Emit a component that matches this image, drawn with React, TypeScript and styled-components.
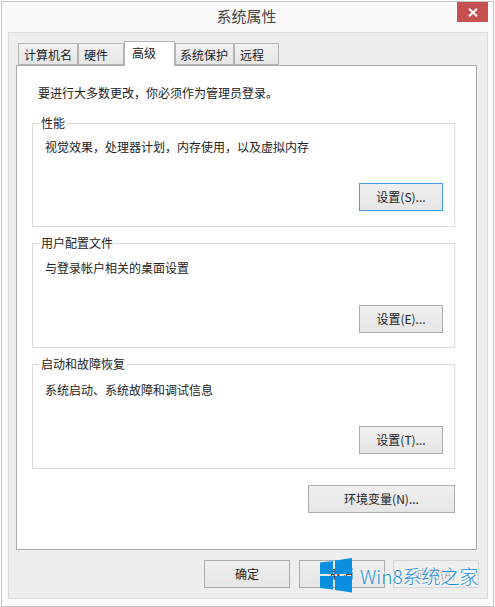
import React from "react";
import styled, { createGlobalStyle } from "styled-components";

const GlobalStyle = createGlobalStyle`
  html, body {
    margin: 0;
    padding: 0;
    background: #ffffff;
  }
  * {
    box-sizing: border-box;
  }
  body {
    font-family: "Noto Sans CJK SC", "Liberation Sans", sans-serif;
    font-size: 12px;
    color: #222222;
  }
`;

const tabs = [
  { label: "计算机名", width: 60, inset: 5 },
  { label: "硬件", width: 46, inset: 5 },
  { label: "高级", width: 51, inset: 7, active: true },
  { label: "系统保护", width: 59, inset: 4 },
  { label: "远程", width: 45, inset: 5 },
];

const groups = [
  {
    title: "性能",
    text: "视觉效果，处理器计划，内存使用，以及虚拟内存",
    button: "设置(S)...",
    height: 104,
    top: 14,
    bottom: 15,
    focused: true,
  },
  {
    title: "用户配置文件",
    text: "与登录帐户相关的桌面设置",
    button: "设置(E)...",
    height: 105,
    top: 15,
    bottom: 14,
  },
  {
    title: "启动和故障恢复",
    text: "系统启动、系统故障和调试信息",
    button: "设置(T)...",
    height: 105,
    top: 16,
    bottom: 14,
  },
];

const App = () => {
  return (
    <>
      <GlobalStyle />
      <Window>
        <TitleBar>
          <Title>系统属性</Title>
          <CloseBtn>
            <svg width="10" height="9" viewBox="0 0 10 9">
              <path d="M1 0.8L9 8.2M9 0.8L1 8.2" stroke="#ffffff" strokeWidth="2" fill="none" />
            </svg>
          </CloseBtn>
        </TitleBar>
        <Frame>
          <TabRow>
            {tabs.map((tab) => (
              <Tab key={tab.label} $width={tab.width} $inset={tab.inset} $active={tab.active}>
                {tab.label}
              </Tab>
            ))}
          </TabRow>
          <Panel>
            <Notice>要进行大多数更改，你必须作为管理员登录。</Notice>
            <GroupList>
              {groups.map((group) => (
                <Group key={group.title} $height={group.height} $top={group.top} $bottom={group.bottom}>
                  <Legend>{group.title}</Legend>
                  <GroupText>{group.text}</GroupText>
                  <GroupFooter>
                    <Button $width={84} $focused={group.focused}>
                      {group.button}
                    </Button>
                  </GroupFooter>
                </Group>
              ))}
            </GroupList>
            <EnvRow>
              <Button $width={147}>环境变量(N)...</Button>
            </EnvRow>
          </Panel>
          <ActionRow>
            <Button $width={86}>确定</Button>
            <Button $width={86}>取消</Button>
            <Button $width={86} $disabled>
              应用(A)
            </Button>
          </ActionRow>
        </Frame>
        <Watermark>
          <svg width="33" height="35" viewBox="0 0 33 35">
            <path d="M0 4.5L13 3V16H0ZM15 2.5L32 0V16H15ZM0 18H13V31.5L0 30ZM15 18H32V34.5L15 32Z" fill="#0a8fe0" />
          </svg>
          <WatermarkText>Win8系统之家</WatermarkText>
        </Watermark>
      </Window>
    </>
  );
};

export default App;

const Window = styled.div`
  position: relative;
  width: 493px;
  height: 606px;
  margin: 1px 0 0 1px;
  padding: 0 5px 7px 6px;
  border: 1px solid #c4c4c4;
  background: #fbfbfb;
  display: flex;
  flex-direction: column;
`;

const TitleBar = styled.div`
  position: relative;
  height: 30px;
  flex: none;
  display: flex;
  justify-content: center;
  align-items: center;
`;

const Title = styled.div`
  font-size: 15px;
  color: #444444;
  margin-right: 3px;
  margin-bottom: 3px;
`;

const CloseBtn = styled.div`
  position: absolute;
  right: 0;
  top: 0;
  width: 31px;
  height: 20px;
  background: #c75050;
  display: flex;
  align-items: center;
  justify-content: center;
`;

const Frame = styled.div`
  flex: 1;
  display: flex;
  flex-direction: column;
  padding: 8px 8px 0 7px;
  background: #eeeeee;
  border: 1px solid #dcdcdc;
`;

const TabRow = styled.div`
  display: flex;
  align-items: flex-end;
  height: 24px;
  padding-left: 2px;
  flex: none;
`;

const Tab = styled.div<{ $width: number; $inset: number; $active?: boolean }>`
  position: relative;
  width: ${(p) => p.$width}px;
  height: ${(p) => (p.$active ? 25 : 22)}px;
  margin-bottom: ${(p) => (p.$active ? -1 : 0)}px;
  z-index: ${(p) => (p.$active ? 2 : 0)};
  display: flex;
  align-items: center;
  border: 1px solid #b4b4b4;
  border-bottom: ${(p) => (p.$active ? "none" : "1px solid #b4b4b4")};
  background: ${(p) => (p.$active ? "#ffffff" : "linear-gradient(#f1f1f1, #e6e6e6)")};
  font-size: 12px;
  line-height: 1;
  padding-left: ${(p) => p.$inset}px;
  padding-top: ${(p) => (p.$active ? 0 : 1)}px;
  padding-bottom: ${(p) => (p.$active ? 2 : 0)}px;
`;

const Panel = styled.div`
  position: relative;
  width: 461px;
  height: 485px;
  flex: none;
  padding: 18px 21px 0 15px;
  background: #ffffff;
  border: 1px solid #aaaaaa;
`;

const Notice = styled.div`
  height: 18px;
  padding-left: 6px;
  line-height: 18px;
  white-space: nowrap;
`;

const GroupList = styled.div`
  display: flex;
  flex-direction: column;
  gap: 16px;
  margin-top: 21px;
`;

const Group = styled.div<{ $height: number; $top: number; $bottom: number }>`
  position: relative;
  width: 423px;
  height: ${(p) => p.$height}px;
  padding: ${(p) => p.$top}px 11px ${(p) => p.$bottom}px 12px;
  border: 1px solid #dcdcdc;
  display: flex;
  flex-direction: column;
`;

const Legend = styled.div`
  position: absolute;
  top: -9px;
  left: 7px;
  padding: 0 2px 0 1px;
  background: #ffffff;
  line-height: 16px;
`;

const GroupText = styled.div`
  line-height: 18px;
  white-space: nowrap;
`;

const GroupFooter = styled.div`
  margin-top: auto;
  display: flex;
  justify-content: flex-end;
`;

const Button = styled.div<{ $width: number; $focused?: boolean; $disabled?: boolean }>`
  width: ${(p) => p.$width}px;
  height: 28px;
  display: flex;
  align-items: center;
  justify-content: center;
  border: 1px solid ${(p) => (p.$focused ? "#3f9ceb" : p.$disabled ? "#d5d5d5" : "#acacac")};
  background: ${(p) => (p.$disabled ? "#efefef" : "linear-gradient(#f0f0f0, #e5e5e5)")};
  color: ${(p) => (p.$disabled ? "#a8a8a8" : "#222222")};
  font-size: 12px;
  line-height: 1;
  white-space: nowrap;
`;

const EnvRow = styled.div`
  display: flex;
  justify-content: flex-end;
  margin-top: 16px;
  width: 423px;
`;

const ActionRow = styled.div`
  display: flex;
  justify-content: flex-end;
  gap: 8.5px;
  margin-top: 10px;
`;

const Watermark = styled.div`
  position: absolute;
  left: 318px;
  top: 556px;
  display: flex;
  align-items: center;
  gap: 7px;
  pointer-events: none;
`;

const WatermarkText = styled.div`
  font-family: "Noto Sans CJK SC", "Liberation Sans", sans-serif;
  font-size: 19px;
  font-weight: 300;
  line-height: 1;
  color: #1f8fdc;
  white-space: nowrap;
  text-shadow: 0 0 3px #ffffff, 0 0 3px #ffffff;
`;
